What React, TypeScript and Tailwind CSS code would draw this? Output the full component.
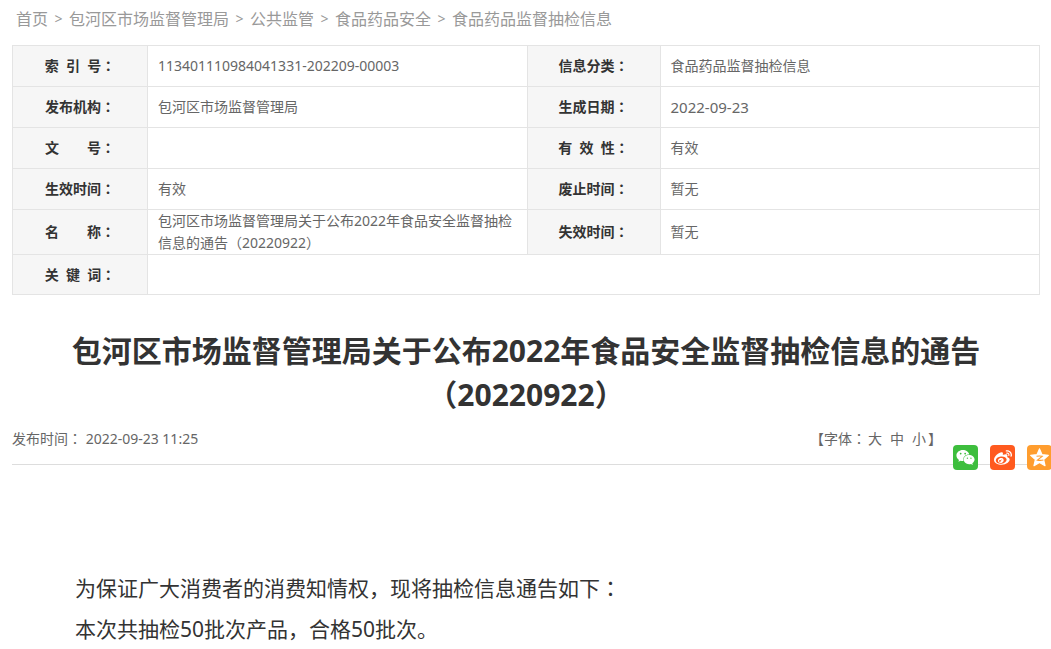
import { Fragment } from 'react';
import { FaWeibo, FaWeixin } from 'react-icons/fa';

const crumbs = ['首页', '包河区市场监督管理局', '公共监管', '食品药品安全', '食品药品监督抽检信息'];

const rows = [
  [
    { label: '索\u00a0\u00a0引\u00a0\u00a0号', value: '113401110984041331-202209-00003' },
    { label: '信息分类', value: '食品药品监督抽检信息' },
  ],
  [
    { label: '发布机构', value: '包河区市场监督管理局' },
    { label: '生成日期', value: '2022-09-23', date: true },
  ],
  [
    { label: '文\u3000\u3000号', value: '' },
    { label: '有\u00a0\u00a0效\u00a0\u00a0性', value: '有效' },
  ],
  [
    { label: '生效时间', value: '有效' },
    { label: '废止时间', value: '暂无' },
  ],
  [
    { label: '名\u3000\u3000称', value: '包河区市场监督管理局关于公布2022年食品安全监督抽检信息的通告（20220922）' },
    { label: '失效时间', value: '暂无' },
  ],
  [{ label: '关\u00a0\u00a0键\u00a0\u00a0词', value: '' }],
];

const fontSizes = ['大', '中', '小'];

// full-width colon, centred in its box
function Colon() {
  return (
    <span lang="zh-TW" className="font-['Noto_Sans_CJK_TC',sans-serif] leading-none">
      ：
    </span>
  );
}

function QzoneIcon() {
  return (
    <svg viewBox="0 0 24 24" className="size-[21px]" aria-hidden="true">
      <path
        d="M12 2.2l2.9 6.6 7.2.7-5.4 4.8 1.6 7.1L12 17.7l-6.3 3.7 1.6-7.1-5.4-4.8 7.2-.7z"
        fill="#fff"
        stroke="#fff"
        strokeWidth="1.4"
        strokeLinejoin="round"
      />
      <path d="M8.6 10.6c2.2-.5 4.4-.5 6.6 0L9.6 15c2.2.4 4.6.4 6.8-.1" fill="none" stroke="#ff9d2e" strokeWidth="1.2" />
    </svg>
  );
}

function Breadcrumb() {
  return (
    <nav className="flex h-[45px] items-start pt-[7px] pl-1 text-base leading-6 text-[#999]">
      {crumbs.map((name, idx) => (
        <Fragment key={name}>
          {idx > 0 && <span className="w-[21px] text-center text-sm leading-6">&gt;</span>}
          <a href="#">{name}</a>
        </Fragment>
      ))}
    </nav>
  );
}

function InfoTable() {
  return (
    <table className="w-full table-fixed border-collapse text-sm leading-[22px]">
      <colgroup>
        <col className="w-[135px]" />
        <col />
        <col className="w-[133px]" />
        <col />
      </colgroup>
      <tbody>
        {rows.map((cells, idx) => (
          <tr key={idx} className={cells.length === 1 ? 'h-10' : 'h-[41px]'}>
            {cells.map((cell) => (
              <Fragment key={cell.label}>
                <th scope="row" className="border border-[#e4e4e4] bg-[#f6f6f6] p-0 text-center font-bold text-[#333]">
                  {cell.label}
                  <Colon />
                </th>
                <td
                  colSpan={cells.length === 1 ? 3 : 1}
                  className={`border border-[#e4e4e4] py-0 pr-2 pl-[10px] text-[#666] ${cell.date ? 'text-[15px]' : 'text-sm'} leading-[22px]`}
                >
                  {cell.value}
                </td>
              </Fragment>
            ))}
          </tr>
        ))}
      </tbody>
    </table>
  );
}

function ShareButtons() {
  return (
    <div className="absolute top-7 -right-3 flex gap-3 text-white">
      <button type="button" aria-label="微信" className="flex size-[25px] items-center justify-center rounded bg-[#3dbe3d]">
        <FaWeixin className="size-[19px]" />
      </button>
      <button type="button" aria-label="新浪微博" className="flex size-[25px] items-center justify-center rounded bg-[#ff5a1f]">
        <FaWeibo className="size-[18px]" />
      </button>
      <button type="button" aria-label="QQ空间" className="flex size-[25px] items-center justify-center rounded bg-[#ff9d2e]">
        <QzoneIcon />
      </button>
    </div>
  );
}

export default function App() {
  return (
    <div
      lang="zh-CN"
      className="overflow-hidden bg-white px-3 pr-[11px] font-['Noto_Sans','Noto_Sans_CJK_SC',sans-serif]"
    >
      <Breadcrumb />
      <InfoTable />

      <h1 className="mt-[34px] text-center text-[30px] leading-[44px] font-bold text-[#333]">
        包河区市场监督管理局关于公布2022年食品安全监督抽检信息的通告（20220922）
      </h1>

      <div className="relative flex h-12 items-start justify-between border-b border-[#ddd] text-sm leading-[44px] text-[#666]">
        <p>
          发布时间
          <Colon /> <time>2022-09-23 11:25</time>
        </p>
        <div className="mr-[98px] flex">
          <span>
            【字体
            <Colon />
          </span>
          <div className="mx-0.5 flex items-start gap-2">
            {fontSizes.map((size) => (
              <button key={size} type="button">
                {size}
              </button>
            ))}
          </div>
          <span>】</span>
        </div>
        <ShareButtons />
      </div>

      <article className="mt-[103px] pl-[63px] text-[21px] leading-[41px] text-[#333]">
        <p>
          为保证广大消费者的消费知情权，现将抽检信息通告如下
          <Colon />
        </p>
        <p>本次共抽检50批次产品，合格50批次。</p>
      </article>
    </div>
  );
}
